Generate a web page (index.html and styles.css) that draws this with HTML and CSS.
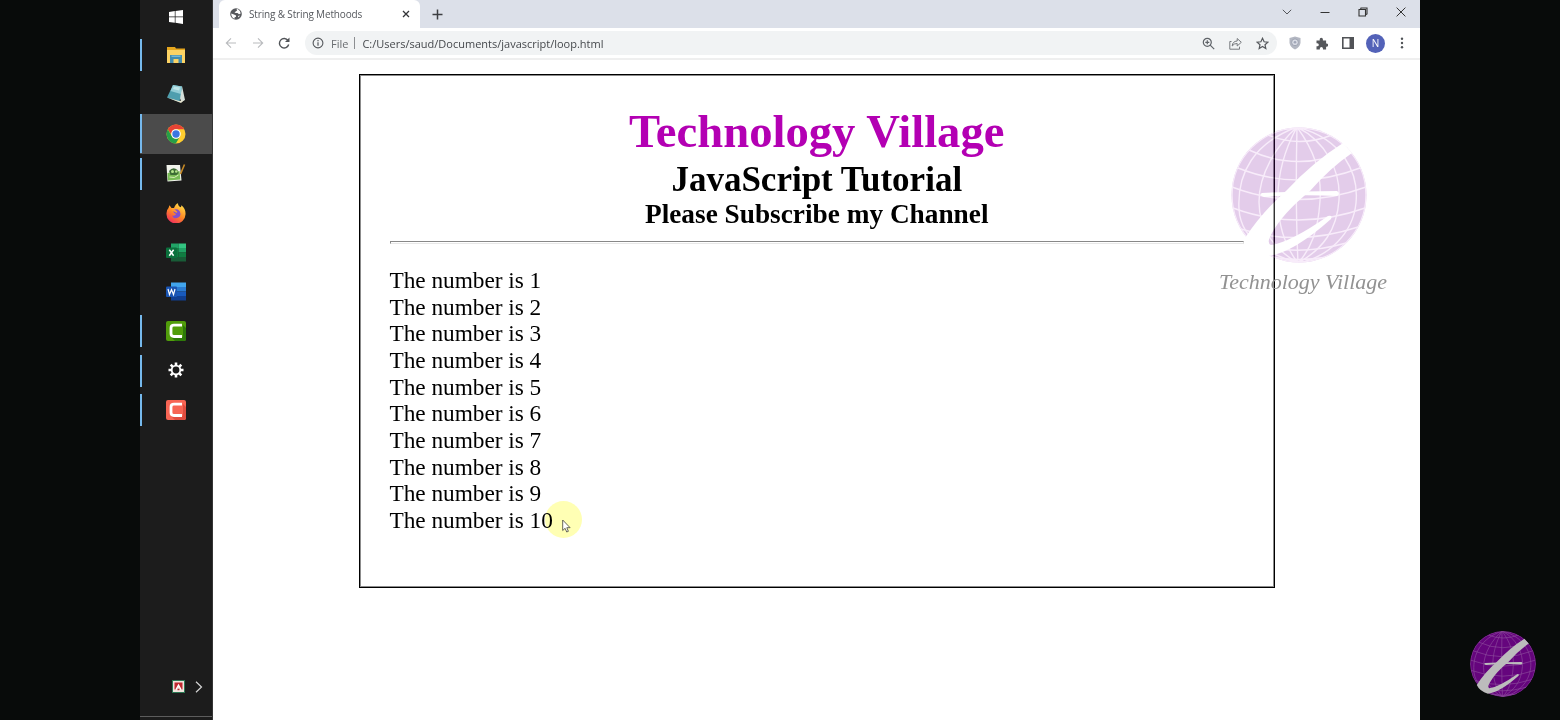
FILE: index.html
```html
<!DOCTYPE html>
<html lang="en">
<head>
<meta charset="utf-8">
<title>String &amp; String Methoods</title>
<link rel="stylesheet" href="styles.css">
</head>
<body>
<svg class="defs" width="0" height="0" aria-hidden="true">
  <defs>
    <clipPath id="disc"><circle cx="70" cy="70" r="67.5"/></clipPath>
    <symbol id="globe" viewBox="0 0 140 140">
      <circle cx="70" cy="70" r="67.5" fill="currentColor"/>
      <g clip-path="url(#disc)" fill="none" stroke="var(--grid)" stroke-width="1.4">
        <circle cx="70" cy="70" r="67"/>
        <path d="M68 2C67 45 67 95 69 138M68 2C48 20 30 48 30 77S48 126 69 138M68 2C56 24 48 50 49 78S58 124 69 138M68 2C25 18 8 48 10 84S50 132 69 138M68 2C84 24 93 46 91 76S82 124 69 138M68 2C96 16 112 45 110 75S94 124 69 138M68 2C114 14 130 48 127 78S100 132 69 138"/>
        <path d="M39 10Q70 23 103 10M20 25Q69 48 121 25M9 43Q69 67 131 43M3 62Q69 87 137 62M4 83Q69 107 136 83M12 104Q69 122 129 102M24 119Q69 132 117 118M42 132Q69 137 99 132"/>
      </g>
      <g fill="var(--mark)">
        <path d="M114 18Q84 37 58 65Q33 87 16 113Q22 126 39 131Q64 128 102 94Q104 90 99 91Q62 117 42 120Q37 118 43 108Q54 88 81 66Q101 43 123 28Z"/>
        <path d="M33 68Q70 66 108 66Q112 68.500 108 71Q70 69 35 72Q29 70 33 68Z"/>
      </g>
    </symbol>
  </defs>
</svg>
<div class="screen">
  <div class="bezel"></div>
  <aside class="taskbar">
    <div class="app first"><svg width="16" height="16" viewBox="0 0 16 16"><path fill="#fff" d="M1 3l5.800-.9v5.400H1zM7.500 2L15 .9v6.600H7.500zM1 8.300h5.800v5.400L1 12.900zM7.500 8.300H15v6.600l-7.500-1.100z"/></svg></div>
    <div class="app open"><svg width="20" height="18" viewBox="0 0 20 18"><path fill="#e5a61e" d="M1 1h8l1 1.500h9V8H1z"/><path fill="#fcd364" d="M1 4h18v13H1z"/><path fill="#438cae" d="M4 17V9h12v8h-3.500v-4h-5v4z"/><path fill="#75b8d4" d="M5.500 9.500h9v1.500h-9z"/></svg></div>
    <div class="app"><svg width="20" height="20" viewBox="0 0 20 20"><path fill="#d5dfda" d="M16 2l3 14-3.500 2L13 12z"/><path fill="#4e9eae" d="M7 1l9 1.500L13.500 18 1 13.500z"/><path fill="#93cdd6" d="M7 1l9 1.500-1.200 7.500L4.500 7z"/><path fill="#bee5e8" d="M8 2.500l6 1-1 3-6-1.500z"/><path fill="#e5e2cd" d="M1 13.500L13.500 17l4.500-1-3 3z"/></svg></div>
    <div class="app open active"><svg width="20" height="20" viewBox="0 0 20 20"><circle cx="10" cy="10" r="9.500" fill="#ffce2f"/><path fill="#e64335" d="M1.800 5.200A9.500 9.500 0 0 1 18.200 5.300H10a4.700 4.700 0 0 0-4.300 6z"/><path fill="#269f48" d="M1.800 5.200A9.500 9.500 0 0 0 9.800 19.500L14 12.400A4.700 4.700 0 0 1 5.700 12z"/><circle cx="10" cy="10" r="4.800" fill="#fff"/><circle cx="10" cy="10" r="3.700" fill="#3b76e1"/></svg></div>
    <div class="app open"><svg width="20" height="20" viewBox="0 0 20 20"><path fill="#f1f3ec" d="M.5 2H14l1.500 15.500-14 1z"/><path fill="#78bb55" d="M1.500 10l12-2 .8 8.500-12.300 1z"/><path fill="#3c6b35" d="M3 8q4-5 8.500-1l1 3-2 2H4.500z"/><circle cx="6.500" cy="8.500" r="1.500" fill="#b6e48c"/><circle cx="10.300" cy="8.500" r="1.300" fill="#b6e48c"/><path fill="none" stroke="#d7efb5" d="M3.500 14q5 2 9-2"/><path stroke="#c78a26" stroke-width="1.600" d="M18.500 1.500L14.500 11"/></svg></div>
    <div class="app"><svg width="20" height="20" viewBox="0 0 20 20"><defs><linearGradient id="fox" x1=".8" y1="0" x2=".2" y2="1"><stop stop-color="#ffe34c"/><stop offset=".5" stop-color="#ff8a25"/><stop offset="1" stop-color="#ef2662"/></linearGradient></defs><path fill="url(#fox)" d="M3.500 2.300L5.500 5 8 5Q9.500 1 12 .3q0 3 3 4l.4-2Q20 6 19.500 11.500A9.500 9.200 0 0 1 .5 11Q.3 7 2.500 5z"/><path fill="#8050d0" d="M7 7.500q2-2 5-1 2.500 1.500 2.500 4.500a4.500 4.500 0 0 1-8.600 1.500q3 1 4.200-1.500L8 10z"/><path fill="#ff9b2c" d="M5 7l5 2.500q2 .5 1-1L8 6z"/></svg></div>
    <div class="app"><svg width="20" height="19" viewBox="0 0 20 19"><path fill="#21a366" d="M5 .5h7.500V5H5z"/><path fill="#33c481" d="M12.500.5H20V5h-7.500z"/><path fill="#107c41" d="M5 5h7.500v9H5z"/><path fill="#21a366" d="M12.500 5H20v4.500h-7.500z"/><path fill="#107c41" d="M12.500 9.500H20V14h-7.500z"/><path fill="#185c37" d="M5 14h15v4.500H5z"/><rect x="0" y="4.500" width="11" height="10.500" rx="1" fill="#0b703c"/><path stroke="#fff" stroke-width="1.500" d="M3.300 6.800l4.300 6M7.600 6.800l-4.300 6"/></svg></div>
    <div class="app"><svg width="20" height="19" viewBox="0 0 20 19"><path fill="#41a5ee" d="M5 .5h15V5H5z"/><path fill="#2b7cd3" d="M5 5h15v4.500H5z"/><path fill="#185abd" d="M5 9.500h15V14H5z"/><path fill="#103f91" d="M5 14h15v4.500H5z"/><rect x="0" y="4.500" width="11" height="10.500" rx="1" fill="#1a55b3"/><path fill="none" stroke="#fff" stroke-width="1.200" d="M2 7l1.500 5.500 2-5 2 5L9 7"/></svg></div>
    <div class="app open"><svg width="20" height="20" viewBox="0 0 20 20"><rect width="20" height="20" rx="2" fill="#519d0b"/><path fill="#2d7909" d="M17 4v12L6 17l3 3h9a2 2 0 0 0 2-2V7z"/><path fill="none" stroke="#fff" stroke-width="2.800" d="M16 4.200H8Q5 4.200 5 7v5.500Q5 15.500 8 15.500h8"/></svg></div>
    <div class="app open"><svg width="18" height="18" viewBox="0 0 18 18"><g fill="none" stroke="#fff"><circle cx="9" cy="9" r="4.300" stroke-width="1.800"/><path stroke-width="2.600" d="M9 4.500V1.500M9 13.500v3M4.500 9h-3M13.500 9h3M5.800 5.800L3.700 3.700M12.200 5.800l2.100-2.100M5.800 12.200l-2.100 2.100M12.200 12.200l2.100 2.100"/></g></svg></div>
    <div class="app open"><svg width="20" height="20" viewBox="0 0 20 20"><rect width="20" height="20" rx="2" fill="#f76554"/><path fill="#df4d40" d="M17 4v12L6 17l3 3h9a2 2 0 0 0 2-2V7z"/><path fill="none" stroke="#fff" stroke-width="2.800" d="M16 4.200H8Q5 4.200 5 7v5.500Q5 15.500 8 15.500h8"/></svg></div>
    <div class="tray">
      <svg width="13" height="13" viewBox="0 0 13 13"><rect x=".5" y=".5" width="12" height="12" fill="#f3e5df" stroke="#2b7753"/><path fill="#bf2930" d="M2.500 2.500h8v7h-1.500L6.500 5 4 9.500H2.500z"/><path fill="none" stroke="#fff" stroke-width="1.200" d="M3.800 9.800L6.500 5l2.700 4.800"/><path fill="#bf2930" d="M5.500 8.700h2v1.500h-2z"/></svg>
      <svg width="8" height="12" viewBox="0 0 8 12"><path d="M1 .8L6.500 6 1 11.200" fill="none" stroke="#d5d5d5" stroke-width="1.200"/></svg>
    </div>
  </aside>

  <main class="browser">
    <header class="tabstrip">
      <div class="tab">
        <svg width="12" height="12" viewBox="0 0 12 12"><circle cx="6" cy="6" r="5.800" fill="#57595d"/><path fill="#fff" d="M1.200 5.500L4 6.400l2 1.100v1.300L4.500 9.500v1.200Q1.200 9.500 1.200 5.500zM5 1.500q1-.5 2 0v1L5.700 3.500 4.500 4.500 6 5h1.500L9 6.200l1.700-.7Q10.500 2.500 8 1.300L7 1zM8 8l2-.5-1.500 2z"/></svg>
        <span class="tab-title">String &amp; String Methoods</span>
        <svg width="8" height="8" viewBox="0 0 8 8"><path d="M1 1l6 6M7 1L1 7" stroke="#333538" stroke-width="1.300"/></svg>
      </div>
      <svg class="plus" width="11" height="11" viewBox="0 0 11 11"><path d="M5.500.5v10M.5 5.500h10" stroke="#3c3e42" stroke-width="1.500"/></svg>
      <div class="window-controls">
        <svg width="10" height="10" viewBox="0 0 10 10"><path d="M.8 2.800L5 7l4.200-4.200" fill="none" stroke="#55575c"/></svg>
        <svg width="10" height="10" viewBox="0 0 10 10"><path d="M.5 5.500h9" stroke="#333"/></svg>
        <svg width="10" height="10" viewBox="0 0 10 10"><path d="M1 2.500h6.500V9H1zM2.500 2.500L3 1h6v6l-1.500.8" fill="none" stroke="#333" stroke-width="1.100"/></svg>
        <svg width="10" height="10" viewBox="0 0 10 10"><path d="M.6.600l8.800 8.800M9.400.600L.6 9.400" stroke="#333"/></svg>
      </div>
    </header>
    <nav class="toolbar">
      <div class="nav-buttons">
        <svg width="12" height="12" viewBox="0 0 12 12"><path d="M11 6H1.500M6 1.300L1.300 6 6 10.700" fill="none" stroke="#b9bbbe" stroke-width="1.100"/></svg>
        <svg width="12" height="12" viewBox="0 0 12 12"><path d="M1 6h9.500M6 1.300L10.700 6 6 10.700" fill="none" stroke="#b9bbbe" stroke-width="1.100"/></svg>
        <svg width="12" height="12" viewBox="0 0 12 12"><path d="M10 3.500A4.700 4.700 0 1 0 10.700 7.500" fill="none" stroke="#505357" stroke-width="1.400"/><path fill="#505357" d="M11.500.5V5H7z"/></svg>
      </div>
      <div class="address">
        <svg width="12" height="12" viewBox="0 0 12 12"><circle cx="6" cy="6" r="4.900" fill="none" stroke="#55585c" stroke-width="1.100"/><path d="M6 5.200v3.500M6 3v1.200" stroke="#55585c" stroke-width="1.200"/></svg>
        <span class="scheme">File</span><span class="divider"></span><span class="url">C:/Users/saud/Documents/javascript/loop.html</span>
        <div class="address-actions">
          <svg width="13" height="13" viewBox="0 0 13 13"><g fill="none" stroke="#5f6368" stroke-width="1.200"><circle cx="5.300" cy="5.300" r="4"/><path d="M8.200 8.200l4 4M3.300 5.300h4M5.300 3.300v4"/></g></svg>
          <svg width="13" height="13" viewBox="0 0 13 13"><g fill="none" stroke="#777a7e" stroke-width="1"><path d="M2.500 4.500H.8v7.700h9.700v-2.500"/><path d="M3.200 9Q3.500 4.300 8.200 4V1.500L12.300 5.300 8.200 9V6.500Q5 6.300 3.200 9z"/></g></svg>
          <svg width="13" height="13" viewBox="0 0 13 13"><path d="M6.500 1.300l1.600 3.500 3.800.4L9 7.700l.8 3.800-3.300-2-3.300 2L4 7.700 1.100 5.200l3.800-.4z" fill="none" stroke="#55585c" stroke-width="1.200"/></svg>
        </div>
      </div>
      <div class="extensions">
        <svg width="12" height="14" viewBox="0 0 12 14"><path fill="#b3b7c2" d="M6 .4l5.500 1.700v5Q10.800 11.500 6 13.600 1.200 11.500.5 7.100v-5z"/><circle cx="6" cy="6.300" r="3.400" fill="#d8dbe4" stroke="#949baa" stroke-width=".8"/><circle cx="6" cy="6.300" r="1.300" fill="#a0a6b7"/></svg>
        <svg width="12" height="13" viewBox="0 0 12 13"><path fill="#55575b" d="M.5 3.500h3.200V2.300a1.600 1.600 0 0 1 3.200 0v1.200h3.200v3h.5a1.600 1.600 0 0 1 0 3.200h-.5v2.800H7v-.8a1.600 1.600 0 0 0-3.200 0v.8H.5V9.300h.8a1.500 1.500 0 0 0 0-3H.5z"/></svg>
        <svg width="12" height="12" viewBox="0 0 12 12"><path fill="#515357" fill-rule="evenodd" d="M0 0h12v12H0zM1.600 1.600v8.800h5.900V1.600z"/></svg>
        <span class="avatar">N</span>
        <svg class="kebab" width="4" height="12" viewBox="0 0 4 12"><g fill="#505357"><circle cx="2" cy="1.800" r="1.200"/><circle cx="2" cy="6" r="1.200"/><circle cx="2" cy="10.200" r="1.200"/></g></svg>
      </div>
    </nav>
    <section class="page">
      <div class="frame">
        <h1>Technology Village</h1>
        <h2>JavaScript Tutorial</h2>
        <h3>Please Subscribe my Channel</h3>
        <hr>
        <div class="output">The number is 1<br>The number is 2<br>The number is 3<br>The number is 4<br>The number is 5<br>The number is 6<br>The number is 7<br>The number is 8<br>The number is 9<br>The number is 10</div>
      </div>
    </section>
  </main>
  <div class="bezel"></div>

  <div class="pointer"><svg width="9" height="14" viewBox="0 0 9 14"><path d="M.7 1v10.500l2.400-2.200 1.600 3.700 1.700-.7-1.600-3.600h3.300z" fill="#fff" stroke="#55554a" stroke-width=".9"/></svg></div>
  <div class="watermark">
    <svg width="140" height="140"><use href="#globe"/></svg>
    <div class="wordmark">Technology Village</div>
  </div>
  <svg class="corner-logo" width="68" height="68" viewBox="0 0 68 68"><use href="#globe" width="68" height="68"/></svg>
</div>
</body>
</html>
```
FILE: styles.css
```css
* { box-sizing: border-box; }
body { margin: 0; background: #080a0a; overflow: hidden; }
svg { display: block; flex: none; }
.defs { position: absolute; }
.screen {
  position: relative;
  display: grid;
  grid-template-columns: 140px 73px 1207px 140px;
  width: 1560px;
  height: 720px;
  font-family: "Open Sans", "Noto Sans", sans-serif;
}
.bezel { background: #080b0a; }

.taskbar {
  display: flex;
  flex-direction: column;
  background: #1c1c1c;
  border-right: 1px solid #343434;
}
.app {
  position: relative;
  display: flex;
  align-items: center;
  justify-content: center;
  height: 39.4px;
  flex: none;
}
.app.first { height: 35.4px; padding-bottom: 2px; }
.app.open::before {
  content: "";
  position: absolute;
  left: 0;
  top: 4px;
  width: 2px;
  height: 32px;
  background: #76b9ed;
}
.app.active { background: #4b4b4b; }
.app.active::before { top: 0; height: 39px; }
.tray {
  display: flex;
  align-items: center;
  gap: 10px;
  height: 60px;
  margin-top: auto;
  margin-bottom: 3px;
  padding-left: 32px;
  border-bottom: 1px solid #5d5d5d;
}

.browser {
  display: flex;
  flex-direction: column;
  background: #fff;
}
.tabstrip {
  display: flex;
  align-items: center;
  height: 28px;
  padding-left: 6px;
  background: #dce0e9;
}
.tab {
  display: flex;
  align-items: center;
  align-self: stretch;
  width: 201px;
  padding: 0 10px 0 11px;
  border-radius: 6px 6px 0 0;
  background: #fff;
}
.tab-title {
  flex: 1;
  margin-left: 7px;
  color: #55585d;
  font-size: 10px;
  letter-spacing: -0.15px;
  white-space: nowrap;
}
.plus { margin-left: 12px; }
.window-controls {
  display: flex;
  gap: 28px;
  margin-left: auto;
  padding: 0 14px 4px 0;
}
.toolbar {
  display: flex;
  align-items: center;
  height: 32px;
  border-bottom: 2px solid #efefef;
}
.nav-buttons {
  display: flex;
  gap: 14.6px;
  padding-left: 12px;
}
.address {
  display: flex;
  align-items: center;
  width: 972px;
  height: 24px;
  margin-left: 14.8px;
  padding: 0 8px 0 7px;
  border-radius: 12px;
  background: #f1f3f4;
  font-size: 11px;
  white-space: nowrap;
}
.scheme { margin-left: 7px; color: #6a6d71; }
.divider { width: 1px; height: 12px; margin: 0 7px 0 6px; background: #8c8e91; }
.url { color: #45484c; }
.address-actions { display: flex; gap: 14px; margin-left: auto; }
.extensions {
  display: flex;
  align-items: center;
  gap: 14.7px;
  margin-left: 12px;
}
.avatar {
  width: 19px;
  height: 19px;
  margin: 0 -3px;
  border-radius: 50%;
  background: #5362b8;
  color: #fff;
  font-size: 10px;
  line-height: 19px;
  text-align: center;
}
.kebab { margin-left: 3px; }

.page {
  padding: 14px 145px 0 146px;
  color: #000;
  font-family: "Liberation Serif", serif;
  font-size: 23.33px;
}
.frame {
  height: 514px;
  padding: 28.5px 30px 28.5px 29.5px;
  border: 1px solid #000;
  outline: 1px solid rgba(0, 0, 0, .45);
  outline-offset: -2px;
}
.frame h1, .frame h2, .frame h3 { margin: 0; text-align: center; }
.frame h1 { color: #b300b3; font-size: 46.67px; line-height: 54px; }
.frame h2 { padding-top: 1px; font-size: 35px; line-height: 41px; }
.frame h3 { font-size: 27.3px; line-height: 28px; }
.frame hr {
  height: 3px;
  margin: 13px 0 23.6px;
  border: 1px solid;
  border-color: #888 #ddd #e8e8e8 #888;
}
.output { letter-spacing: -0.04px; line-height: 26.67px; }

.pointer {
  position: absolute;
  left: 545px;
  top: 501px;
  width: 37px;
  height: 37px;
  padding: 18px 0 0 17px;
  border-radius: 50%;
  background: #ffffb4;
  mix-blend-mode: multiply;
}
.watermark {
  position: absolute;
  left: 1219px;
  top: 125px;
  width: 168px;
}
.watermark svg {
  margin-left: 10px;
  color: #78059b;
  opacity: .2;
  --grid: #dda5ea;
  --mark: #fff;
}
.wordmark {
  margin-top: 3px;
  color: #929292;
  font: italic 22px/28px "Liberation Serif", serif;
  white-space: nowrap;
}
.corner-logo {
  position: absolute;
  left: 1469px;
  top: 630px;
  color: #65057d;
  --grid: #8a4a9b;
  --mark: #bcbcbc;
}
```
